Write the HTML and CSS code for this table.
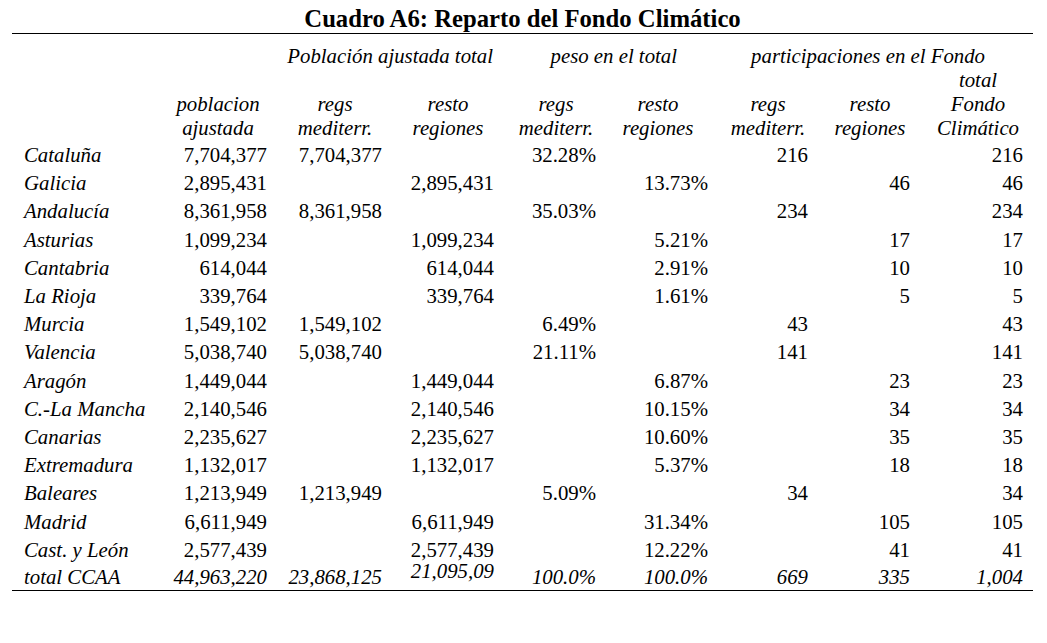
FILE: index.html
```html
<!DOCTYPE html>
<html lang="es">
<head>
<meta charset="utf-8">
<title>Cuadro A6</title>
<link rel="stylesheet" href="styles.css">
</head>
<body>
<div class="page">
  <h1 class="title">Cuadro A6: Reparto del Fondo Climático</h1>
  <table class="cuadro">
    <colgroup>
      <col class="c-label">
      <col class="c1"><col class="c2"><col class="c3">
      <col class="c4"><col class="c5">
      <col class="c6"><col class="c7"><col class="c8">
      <col class="c-end">
    </colgroup>
    <thead>
      <tr class="groups">
        <th></th>
        <th></th>
        <th colspan="2" class="g-pob">Población ajustada total</th>
        <th colspan="2" class="g-peso">peso en el total</th>
        <th colspan="3" class="g-part">participaciones en el Fondo</th>
        <th></th>
      </tr>
      <tr class="subs">
        <th></th>
        <th>poblacion<br>ajustada</th>
        <th>regs<br>mediterr.</th>
        <th>resto<br>regiones</th>
        <th>regs<br>mediterr.</th>
        <th>resto<br>regiones</th>
        <th>regs<br>mediterr.</th>
        <th>resto<br>regiones</th>
        <th>total<br>Fondo<br>Climático</th>
        <th></th>
      </tr>
    </thead>
    <tbody>
      <tr><td>Cataluña</td><td>7,704,377</td><td>7,704,377</td><td></td><td>32.28%</td><td></td><td>216</td><td></td><td>216</td><td></td></tr>
      <tr><td>Galicia</td><td>2,895,431</td><td></td><td>2,895,431</td><td></td><td>13.73%</td><td></td><td>46</td><td>46</td><td></td></tr>
      <tr><td>Andalucía</td><td>8,361,958</td><td>8,361,958</td><td></td><td>35.03%</td><td></td><td>234</td><td></td><td>234</td><td></td></tr>
      <tr><td>Asturias</td><td>1,099,234</td><td></td><td>1,099,234</td><td></td><td>5.21%</td><td></td><td>17</td><td>17</td><td></td></tr>
      <tr><td>Cantabria</td><td>614,044</td><td></td><td>614,044</td><td></td><td>2.91%</td><td></td><td>10</td><td>10</td><td></td></tr>
      <tr><td>La Rioja</td><td>339,764</td><td></td><td>339,764</td><td></td><td>1.61%</td><td></td><td>5</td><td>5</td><td></td></tr>
      <tr><td>Murcia</td><td>1,549,102</td><td>1,549,102</td><td></td><td>6.49%</td><td></td><td>43</td><td></td><td>43</td><td></td></tr>
      <tr><td>Valencia</td><td>5,038,740</td><td>5,038,740</td><td></td><td>21.11%</td><td></td><td>141</td><td></td><td>141</td><td></td></tr>
      <tr><td>Aragón</td><td>1,449,044</td><td></td><td>1,449,044</td><td></td><td>6.87%</td><td></td><td>23</td><td>23</td><td></td></tr>
      <tr><td>C.-La Mancha</td><td>2,140,546</td><td></td><td>2,140,546</td><td></td><td>10.15%</td><td></td><td>34</td><td>34</td><td></td></tr>
      <tr><td>Canarias</td><td>2,235,627</td><td></td><td>2,235,627</td><td></td><td>10.60%</td><td></td><td>35</td><td>35</td><td></td></tr>
      <tr><td>Extremadura</td><td>1,132,017</td><td></td><td>1,132,017</td><td></td><td>5.37%</td><td></td><td>18</td><td>18</td><td></td></tr>
      <tr><td>Baleares</td><td>1,213,949</td><td>1,213,949</td><td></td><td>5.09%</td><td></td><td>34</td><td></td><td>34</td><td></td></tr>
      <tr><td>Madrid</td><td>6,611,949</td><td></td><td>6,611,949</td><td></td><td>31.34%</td><td></td><td>105</td><td>105</td><td></td></tr>
      <tr><td>Cast. y León</td><td>2,577,439</td><td></td><td>2,577,439</td><td></td><td>12.22%</td><td></td><td>41</td><td>41</td><td></td></tr>
      <tr class="total"><td>total CCAA</td><td>44,963,220</td><td>23,868,125</td><td class="cut"><span class="raised">21,095,09</span></td><td>100.0%</td><td>100.0%</td><td>669</td><td>335</td><td>1,004</td><td></td></tr>
    </tbody>
  </table>
</div>
</body>
</html>
```

FILE: styles.css
```css
html, body {
  margin: 0;
  padding: 0;
  background: #fff;
}

.page {
  width: 1021px;
  margin-left: 12px;
  padding-top: 5px;
  font-family: "Liberation Serif", "Times New Roman", serif;
  color: #000;
}

.title {
  margin: 0;
  font-family: "Liberation Serif", "Times New Roman", serif;
  font-size: 24.7px;
  font-weight: bold;
  line-height: 28px;
  text-align: center;
  border-bottom: 1px solid #000;
}

.cuadro {
  width: 1021px;
  border-collapse: collapse;
  table-layout: fixed;
  font-family: "Liberation Serif", "Times New Roman", serif;
  font-size: 20.8px;
}

.c-label { width: 157px; }
.c1 { width: 98px; }
.c2 { width: 115px; }
.c3 { width: 112px; }
.c4 { width: 102px; }
.c5 { width: 112px; }
.c6 { width: 100px; }
.c7 { width: 102px; }
.c8 { width: 113px; }
.c-end { width: 10px; }

.cuadro th {
  font-style: italic;
  font-weight: normal;
  text-align: center;
  padding: 0;
  line-height: 24px;
  vertical-align: bottom;
  white-space: nowrap;
}

.cuadro .groups th {
  padding-top: 10px;
  text-align: right;
}

.cuadro .groups .g-pob { padding-right: 1px; }
.cuadro .groups .g-peso { padding-right: 31px; }
.cuadro .groups .g-part { padding-right: 38px; }

.subs th {
  padding-bottom: 1px;
}
.subs th:nth-child(2) { padding-left: 0; }
.subs th:nth-child(3) { padding-left: 21px; }
.subs th:nth-child(4) { padding-left: 20px; }
.subs th:nth-child(5) { padding-left: 22px; }
.subs th:nth-child(6) { padding-left: 12px; }
.subs th:nth-child(7) { padding-left: 20px; }
.subs th:nth-child(8) { padding-left: 22px; }
.subs th:nth-child(9) { padding-left: 23px; }

.cuadro td {
  padding: 0;
  height: 28.2px;
  line-height: 28px;
  text-align: right;
  white-space: nowrap;
}

.cuadro td:first-child {
  text-align: left;
  font-style: italic;
  padding-left: 12px;
}

.cuadro .total td {
  font-style: italic;
  height: 26px;
  line-height: 26px;
  vertical-align: top;
  border-bottom: 1px solid #000;
}

.cuadro .total td.cut {
  position: relative;
}

.raised {
  position: relative;
  top: -6px;
}

.cut::after {
  content: "";
  position: absolute;
  right: 2px;
  bottom: -3px;
  width: 4px;
  height: 2px;
  background: #000;
}
```
